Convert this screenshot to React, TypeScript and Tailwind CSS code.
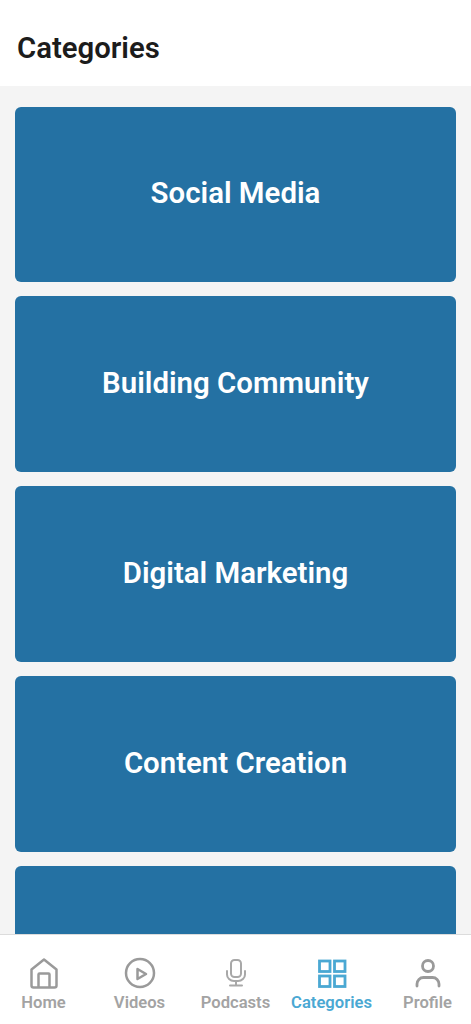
const categories = ["Social Media", "Building Community", "Digital Marketing", "Content Creation", ""];

function HomeIcon() {
  return (
    <svg width="32" height="32" viewBox="0 0 32 32" fill="none" stroke="#9a9a9a" strokeWidth="2.5" strokeLinejoin="round">
      <path d="M3.5 12.5 16 2.5l12.5 10v16a2 2 0 0 1-2 2h-21a2 2 0 0 1-2-2z" />
      <path d="M10.5 30.5V17.5a1 1 0 0 1 1-1h9a1 1 0 0 1 1 1v13" />
    </svg>
  );
}

function PlayIcon() {
  return (
    <svg width="32" height="32" viewBox="0 0 32 32" fill="none" stroke="#9a9a9a" strokeWidth="2.5" strokeLinejoin="round">
      <circle cx="16" cy="16" r="14" />
      <path d="M13.5 12 22 17l-8.5 5z" />
    </svg>
  );
}

function MicIcon() {
  return (
    <svg width="32" height="32" viewBox="0 0 32 32" fill="none" stroke="#a8a8a8" strokeWidth="2" strokeLinecap="round">
      <rect x="11" y="3" width="10" height="17" rx="3.5" />
      <path d="M7 14v3.5a7 6.5 0 0 0 7 6.5h4a7 6.5 0 0 0 7-6.5V14" />
      <path d="M16 24v4.5M10 28.5h12" />
    </svg>
  );
}

function GridIcon() {
  return (
    <svg width="32" height="32" viewBox="0 0 32 32" fill="none" stroke="#4aa8d3" strokeWidth="2.8">
      <rect x="3.5" y="4" width="10.5" height="10.5" />
      <rect x="18.5" y="4" width="10.5" height="10.5" />
      <rect x="3.5" y="19" width="10.5" height="10.5" />
      <rect x="18.5" y="19" width="10.5" height="10.5" />
    </svg>
  );
}

function UserIcon() {
  return (
    <svg width="32" height="32" viewBox="0 0 32 32" fill="none" stroke="#9a9a9a" strokeWidth="2.8" strokeLinecap="round">
      <circle cx="16" cy="9" r="5.5" />
      <path d="M5 29v-2a6.5 6.5 0 0 1 6.5-6.5h9a6.5 6.5 0 0 1 6.5 6.5v2" />
    </svg>
  );
}

const tabs = [
  { label: "Home", icon: <HomeIcon />, active: false },
  { label: "Videos", icon: <PlayIcon />, active: false },
  { label: "Podcasts", icon: <MicIcon />, active: false },
  { label: "Categories", icon: <GridIcon />, active: true },
  { label: "Profile", icon: <UserIcon />, active: false },
];

export default function App() {
  return (
    <div className="flex h-[1024px] flex-col overflow-hidden bg-white font-['Roboto',sans-serif]">
      <header className="flex h-[86px] shrink-0 items-center bg-white px-[17px] pt-[11px]">
        <h1 className="text-[29.3px] font-semibold text-[#1c1c1c]">Categories</h1>
      </header>
      <main className="flex min-h-0 flex-1 flex-col gap-[14px] overflow-hidden bg-[#f4f4f4] px-[15px] pt-[20.5px]">
        {categories.map((name, i) => (
          <div key={i} className="flex h-[175.75px] shrink-0 items-center justify-center rounded-md bg-[#2471a3] pb-[2px]">
            <span className="text-[29.4px] font-semibold text-white">{name}</span>
          </div>
        ))}
      </main>
      <nav className="grid h-[90px] shrink-0 grid-cols-[repeat(5,96px)] justify-center border-t border-[#dcdcdc] bg-white pt-[22px]">
        {tabs.map((tab) => (
          <div key={tab.label} className="flex flex-col items-center">
            {tab.icon}
            <span className={`mt-[4px] whitespace-nowrap text-[16.6px] font-semibold leading-[20px] ${tab.active ? "text-[#4aa8d3]" : "text-[#a3a3a3]"}`}>
              {tab.label}
            </span>
          </div>
        ))}
      </nav>
    </div>
  );
}
